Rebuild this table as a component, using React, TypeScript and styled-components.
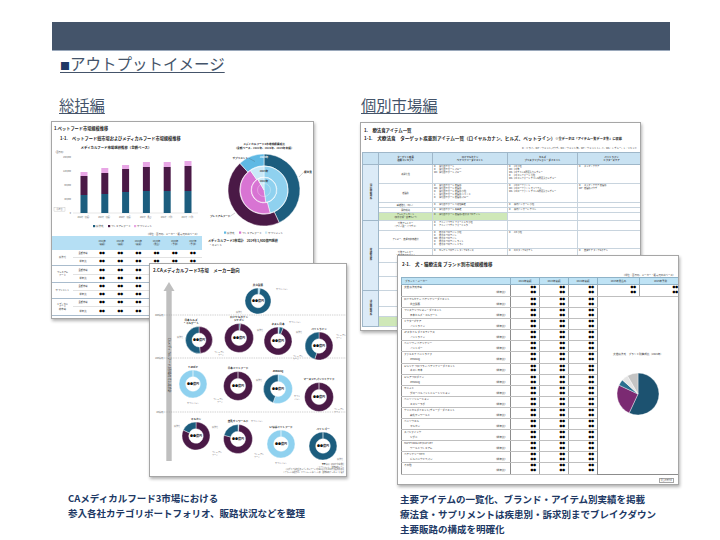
import styled, { createGlobalStyle } from "styled-components";

const GlobalStyle = createGlobalStyle`
  html,
  body {
    margin: 0;
    padding: 0;
    background: #fff;
  }
  body {
    font-family: "Noto Sans CJK JP", "Noto Sans", sans-serif;
  }
`;

const C = {
  teal: "#1c5d7e",
  purple: "#4a1946",
  pink: "#e8a6e5",
  magenta: "#d874d3",
  sky: "#5fb9e4",
  lightSky: "#8fd1ef",
  pale: "#c9e9f8",
  arrow: "#bfbfbf",
};

// ---- geometry helpers for the little charts ----

function polar(cx: number, cy: number, r: number, deg: number) {
  const a = ((deg - 90) * Math.PI) / 180;
  return [cx + r * Math.cos(a), cy + r * Math.sin(a)];
}

function sector(cx: number, cy: number, ro: number, ri: number, a0: number, a1: number) {
  const end = a1 - a0 >= 359.9 ? a0 + 359.9 : a1;
  const large = end - a0 > 180 ? 1 : 0;
  const [x0, y0] = polar(cx, cy, ro, a0);
  const [x1, y1] = polar(cx, cy, ro, end);
  if (ri <= 0) {
    return `M${cx},${cy} L${x0},${y0} A${ro},${ro} 0 ${large} 1 ${x1},${y1} Z`;
  }
  const [x2, y2] = polar(cx, cy, ri, end);
  const [x3, y3] = polar(cx, cy, ri, a0);
  return `M${x0},${y0} A${ro},${ro} 0 ${large} 1 ${x1},${y1} L${x2},${y2} A${ri},${ri} 0 ${large} 0 ${x3},${y3} Z`;
}

type Seg = [number, number, string];

// ---- page frame ----

const Page = styled.div`
  width: 720px;
  height: 540px;
  overflow: hidden;
  box-sizing: border-box;
  padding-top: 22px;
  background: #fff;
`;

const HeaderBar = styled.div`
  margin-left: 52px;
  width: 618px;
  height: 28px;
  background: #44546a;
  border-bottom: 1px solid #9aa8bb;
`;

const PageTitle = styled.h1`
  width: fit-content;
  margin: 2px 0 0 60px;
  font-size: 15.5px;
  font-weight: 400;
  line-height: 20px;
  color: #44546a;
  text-decoration: underline;
  text-decoration-thickness: 1px;
  text-underline-offset: 2px;
`;

const Bullet = styled.span`
  color: #1f3864;
  font-size: 10px;
`;

const Columns = styled.div`
  display: flex;
  margin-top: 18px;
  padding-left: 51px;
`;

const Column = styled.div<{ $w: number }>`
  width: ${(p) => p.$w}px;
  flex-shrink: 0;
  display: flex;
  flex-direction: column;
`;

const SectionHeading = styled.h2<{ $indent: number }>`
  width: fit-content;
  margin: 0 0 7px ${(p) => p.$indent}px;
  font-size: 15.3px;
  font-weight: 400;
  line-height: 20px;
  color: #44546a;
  text-decoration: underline;
  text-decoration-thickness: 1px;
  text-underline-offset: 2px;
`;

const DocStack = styled.div<{ $h: number }>`
  position: relative;
  height: ${(p) => p.$h}px;
`;

const Caption = styled.p<{ $top: number; $indent: number }>`
  margin: ${(p) => p.$top}px 0 0;
  padding-left: ${(p) => p.$indent}px;
  font-size: 9.5px;
  font-weight: 700;
  line-height: 15px;
  color: #203864;
  white-space: nowrap;
`;

// ---- document sheets ----

const Sheet = styled.div<{ $x: number; $y: number; $w: number; $h: number }>`
  position: absolute;
  left: ${(p) => p.$x}px;
  top: ${(p) => p.$y}px;
  width: ${(p) => p.$w}px;
  height: ${(p) => p.$h}px;
  box-sizing: border-box;
  background: #fff;
  border: 1px solid #a6a6a6;
  box-shadow: 1px 2px 3px rgba(0, 0, 0, 0.3);
  overflow: hidden;
  display: flex;
  flex-direction: column;
  color: #222;
`;

const SheetTitle = styled.div<{ $top: number; $left: number; $size?: number }>`
  padding: ${(p) => p.$top}px 0 0 ${(p) => p.$left}px;
  font-size: ${(p) => p.$size ?? 4.4}px;
  font-weight: 700;
  line-height: 6px;
  white-space: nowrap;
`;

const SmallNote = styled.span`
  font-size: 3.2px;
`;

const UnitNote = styled.div<{ $top?: number }>`
  margin-top: ${(p) => p.$top ?? 0}px;
  padding-right: 3px;
  height: 4px;
  font-size: 2.4px;
  line-height: 4px;
  text-align: right;
  color: #444;
  white-space: nowrap;
`;

// ---- sheet 1: market size ----

const SplitBody = styled.div`
  display: grid;
  grid-template-columns: 150px 1fr;
  margin-top: 1px;
`;

const Pane = styled.div`
  display: flex;
  flex-direction: column;
`;

const MarketTable = styled.table`
  width: 150px;
  border-collapse: collapse;
  table-layout: fixed;
  font-size: 2.3px;
  line-height: 2.8px;
  color: #333;
`;

const MarketHead = styled.th<{ $w?: number }>`
  width: ${(p) => (p.$w ? `${p.$w}px` : "auto")};
  height: 14px;
  padding: 0;
  background: #b5dff4;
  font-weight: 400;
  text-align: center;
`;

const MarketCell = styled.td<{ $end?: boolean }>`
  height: 7.2px;
  padding: 0;
  text-align: center;
  border-bottom: 1px solid ${(p) => (p.$end ? "#a9bccd" : "#e2e2e2")};
`;

const Mark = styled.span`
  font-size: 2.8px;
  font-weight: 700;
  color: #000;
`;

const PaneLead = styled.div`
  margin: 2px 0 0 6px;
  font-size: 3.1px;
  font-weight: 700;
  line-height: 4px;
  white-space: nowrap;
`;

const PaneComment = styled.div`
  margin-left: 7px;
  font-size: 2.6px;
  line-height: 4px;
`;

const bars = [
  { year: "2022年（実績）", t: 53, p: 34, k: 30 },
  { year: "2023年（実績）", t: 52, p: 31, k: 26 },
  { year: "2024年（実績）", t: 50, p: 27, k: 23 },
  { year: "2025年（見込）", t: 49, p: 25, k: 20 },
  { year: "2026年（予測）", t: 49, p: 25, k: 20 },
  { year: "2027年（予測）", t: 49, p: 24, k: 19 },
];

const ticks: [string, number][] = [
  ["160,000", 15],
  ["120,000", 29],
  ["80,000", 43],
  ["40,000", 57],
  ["0", 71],
];

function BarChart() {
  const base = 71;
  return (
    <svg width={150} height={90} viewBox="0 0 150 90">
      <text x={64} y={6.5} fontSize={3.4} fontWeight={700} textAnchor="middle" fill="#222">
        メディカルフード市場規模推移（金額ベース）
      </text>
      <text x={2} y={11} fontSize={2.2} fill="#555">
        （百万円）
      </text>
      {ticks.map(([v, y]) => (
        <text key={v} x={19} y={y + 0.8} fontSize={2.2} textAnchor="end" fill="#555">
          {v}
        </text>
      ))}
      <rect x={2} y={65.5} width={11} height={3.6} fill="none" stroke="#a6a6a6" strokeWidth={0.3} />
      <text x={7.5} y={68.2} fontSize={1.8} textAnchor="middle" fill="#777">
        （参考値）
      </text>
      <line x1={21} y1={base} x2={146} y2={base} stroke="#bfbfbf" strokeWidth={0.4} />
      {bars.map((b, i) => {
        const x = 32 + i * 20.8 - 3.5;
        return (
          <g key={b.year}>
            <rect x={x} y={b.k} width={7} height={b.p - b.k} fill={C.pink} />
            <rect x={x} y={b.p} width={7} height={b.t - b.p} fill={C.purple} />
            <rect x={x} y={b.t} width={7} height={base - b.t} fill={C.teal} />
            <text x={x + 3.5} y={75.5} fontSize={1.8} textAnchor="middle" fill="#555">
              {b.year}
            </text>
          </g>
        );
      })}
      <rect x={41} y={83} width={2.2} height={2.2} fill={C.teal} />
      <text x={44} y={85.1} fontSize={2.5} fill="#444">
        療法食
      </text>
      <rect x={56} y={83} width={2.2} height={2.2} fill={C.purple} />
      <text x={59} y={85.1} fontSize={2.5} fill="#444">
        プレミアムフード
      </text>
      <rect x={82} y={83} width={2.2} height={2.2} fill={C.pink} />
      <text x={85} y={85.1} fontSize={2.5} fill="#444">
        サプリメント
      </text>
    </svg>
  );
}

const rings: { ro: number; ri: number; segs: Seg[] }[] = [
  { ro: 36, ri: 24.2, segs: [[0, 155, C.teal], [155, 318, C.purple], [318, 360, C.sky]] },
  { ro: 23.8, ri: 12.9, segs: [[0, 165, C.lightSky], [165, 325, C.magenta], [325, 360, C.pale]] },
  { ro: 12.5, ri: 0, segs: [[0, 172, C.lightSky], [172, 330, C.magenta], [330, 360, C.pale]] },
];

function ShareDonut() {
  const cx = 62;
  const cy = 48;
  return (
    <svg width={111} height={95} viewBox="0 0 111 95">
      <text x={cx} y={3.4} fontSize={2.7} fontWeight={700} textAnchor="middle" fill="#222">
        メディカルフード3市場規模構成比
      </text>
      <text x={cx} y={7.2} fontSize={2.7} fontWeight={700} textAnchor="middle" fill="#222">
        （金額ベース、2022年、2023年、2024年実績）
      </text>
      {rings.map((ring, ri) =>
        ring.segs.map(([a0, a1, col], si) => (
          <path
            key={`${ri}-${si}`}
            d={sector(cx, cy, ring.ro, ring.ri, a0, a1)}
            fill={col}
            stroke="#fff"
            strokeWidth={0.5}
          />
        ))
      )}
      <circle cx={cx} cy={cy} r={6.5} fill="none" stroke="#fff" strokeWidth={0.3} />
      <text x={cx} y={15.5} fontSize={2.5} fontWeight={700} textAnchor="middle" fill="#fff">
        2024年
      </text>
      <text x={cx} y={30} fontSize={2.5} fontWeight={700} textAnchor="middle" fill="#222">
        2023年
      </text>
      <text x={cx} y={40} fontSize={2.5} fontWeight={700} textAnchor="middle" fill="#222">
        2022年
      </text>
      <text x={46} y={16.6} fontSize={2.6} fontWeight={700} textAnchor="end" fill="#222">
        サプリメント
      </text>
      <line x1={46.5} y1={16} x2={53} y2={19.5} stroke="#444" strokeWidth={0.25} />
      <text x={102} y={30.8} fontSize={2.6} fontWeight={700} fill="#222">
        療法食
      </text>
      <line x1={97} y1={35} x2={101.5} y2={30.3} stroke="#444" strokeWidth={0.25} />
      <text x={8} y={74.8} fontSize={2.6} fontWeight={700} fill="#222">
        プレミアムフード
      </text>
      <line x1={28.5} y1={74} x2={33} y2={71} stroke="#444" strokeWidth={0.25} />
      <rect x={22} y={89.5} width={2.2} height={2.2} fill={C.sky} />
      <text x={25} y={91.6} fontSize={2.5} fill="#444">
        療法食
      </text>
      <rect x={37} y={89.5} width={2.2} height={2.2} fill={C.magenta} />
      <text x={40} y={91.6} fontSize={2.5} fill="#444">
        プレミアムフード
      </text>
      <rect x={63} y={89.5} width={2.2} height={2.2} fill={C.pale} />
      <text x={66} y={91.6} fontSize={2.5} fill="#444">
        サプリメント
      </text>
    </svg>
  );
}

const years: [string, string][] = [
  ["2022年", "（実績）"],
  ["2023年", "（実績）"],
  ["2024年", "（実績）"],
  ["2025年", "（見込）"],
  ["2026年", "（予測）"],
  ["2027年", "（予測）"],
];

const marketGroups: string[][] = [["療法食"], ["プレミアム", "フード"], ["サプリメント"], ["メディカル", "フード", "総市場"]];

function MarketSheet() {
  return (
    <Sheet $x={0} $y={0} $w={263} $h={198}>
      <SheetTitle $top={3} $left={2} $size={4.2}>
        1.ペットフード市場規模推移
      </SheetTitle>
      <SheetTitle $top={4} $left={8} $size={4.2}>
        1-1.　ペットフード総市場およびメディカルフード市場規模推移
      </SheetTitle>
      <SplitBody>
        <Pane>
          <BarChart />
          <UnitNote>（単位：百万円、メーカー・販売元出荷ベース）</UnitNote>
          <MarketTable>
            <thead>
              <tr>
                <MarketHead $w={21} />
                <MarketHead $w={20} />
                {years.map(([y, k]) => (
                  <MarketHead key={y}>
                    {y}
                    <br />
                    {k}
                  </MarketHead>
                ))}
              </tr>
            </thead>
            <tbody>
              {marketGroups.map((g) =>
                ["金額市場", "前年比"].map((sub, si) => (
                  <tr key={g.join() + sub}>
                    {si === 0 && (
                      <MarketCell rowSpan={2} $end>
                        {g.map((l) => (
                          <div key={l}>{l}</div>
                        ))}
                      </MarketCell>
                    )}
                    <MarketCell $end={si === 1}>{sub}</MarketCell>
                    {years.map(([y]) => (
                      <MarketCell key={y} $end={si === 1}>
                        <Mark>●●</Mark>
                      </MarketCell>
                    ))}
                  </tr>
                ))
              )}
            </tbody>
          </MarketTable>
        </Pane>
        <Pane>
          <ShareDonut />
          <PaneLead>メディカルフード3市場計　2024年1,600億円規模</PaneLead>
          <PaneComment>・コメント</PaneComment>
        </Pane>
      </SplitBody>
    </Sheet>
  );
}

// ---- sheet 2: maker positioning ----

type Tag = { t: string[]; x: number; y: number; a?: "start" | "middle" | "end" };
type Maker = { name: string[]; nx?: number; cx: number; cy: number; r: number; segs: Seg[]; tags: Tag[] };

const PF = ["プレミアム", "フード"];

const makers: Maker[] = [
  {
    name: ["共立製薬"], cx: 108, cy: 37, r: 13,
    segs: [[0, 10, C.lightSky], [10, 360, C.teal]],
    tags: [{ t: ["サプリメント"], x: 126, y: 26 }, { t: ["療法食"], x: 92, y: 49, a: "end" }],
  },
  {
    name: ["日本ヒルズ", "・コルゲート"], nx: 41, cx: 49, cy: 76, r: 13.5,
    segs: [[0, 175, C.purple], [175, 360, C.teal]],
    tags: [{ t: ["療法食"], x: 33, y: 74, a: "end" }],
  },
  {
    name: ["ロイヤルカナン", "ジャポン"], cx: 89, cy: 74, r: 14.5,
    segs: [[0, 6, C.teal], [6, 360, C.purple]],
    tags: [{ t: ["療法食"], x: 107, y: 67 }, { t: PF, x: 74, y: 89, a: "end" }],
  },
  {
    name: ["ネスレ日本"], cx: 128, cy: 77, r: 14,
    segs: [[0, 6, C.lightSky], [6, 22, C.teal], [22, 360, C.purple]],
    tags: [{ t: ["サプリメント"], x: 139, y: 59 }, { t: PF, x: 143, y: 93 }],
  },
  {
    name: ["ペットライン"], cx: 169, cy: 82, r: 14,
    segs: [[0, 198, C.purple], [198, 360, C.teal]],
    tags: [{ t: ["療法食"], x: 152, y: 69, a: "end" }, { t: PF, x: 186, y: 72 }],
  },
  {
    name: ["Y and P"], cx: 43, cy: 120, r: 14,
    segs: [[0, 360, C.lightSky]],
    tags: [{ t: ["サプリメント"], x: 43, y: 140, a: "middle" }],
  },
  {
    name: ["日本ペットフード"], cx: 88, cy: 122, r: 14.5,
    segs: [[0, 360, C.purple]],
    tags: [{ t: PF, x: 73, y: 136, a: "end" }],
  },
  {
    name: ["ZENOAQ"], cx: 128, cy: 125, r: 14.5,
    segs: [[0, 200, C.lightSky], [200, 360, C.teal]],
    tags: [{ t: ["療法食"], x: 112, y: 117, a: "end" }, { t: ["サプリ", "メント"], x: 144, y: 133 }],
  },
  {
    name: ["マースジャパンリミテッド"], cx: 169, cy: 133, r: 14.5,
    segs: [[0, 360, C.purple]],
    tags: [{ t: PF, x: 184, y: 146 }],
  },
  {
    name: ["マルカン"], cx: 46, cy: 172, r: 14,
    segs: [[0, 295, C.purple], [295, 360, C.teal]],
    tags: [{ t: ["療法食"], x: 30, y: 163, a: "end" }, { t: PF, x: 62, y: 189 }],
  },
  {
    name: ["森乳サンワールド"], cx: 88, cy: 175, r: 14.5,
    segs: [[0, 4, C.lightSky], [4, 285, C.purple], [285, 360, C.teal]],
    tags: [{ t: ["療法食"], x: 68, y: 164, a: "end" }, { t: ["サプリメント"], x: 101, y: 158 }, { t: PF, x: 104, y: 191 }],
  },
  {
    name: ["いなばペットフード"], cx: 131, cy: 180, r: 14,
    segs: [[0, 360, C.lightSky]],
    tags: [{ t: ["サプリメント"], x: 131, y: 200, a: "middle" }],
  },
  {
    name: ["ペットゴー"], cx: 173, cy: 182, r: 14,
    segs: [[0, 360, C.teal]],
    tags: [{ t: ["療法食"], x: 187, y: 196 }],
  },
];

function MakerDonut({ m }: { m: Maker }) {
  const ri = m.r * 0.52;
  return (
    <g>
      {m.segs.map(([a0, a1, col], i) => (
        <path key={i} d={sector(m.cx, m.cy, m.r, ri, a0, a1)} fill={col} stroke="#fff" strokeWidth={0.4} />
      ))}
      <text x={m.cx} y={m.cy + 1.1} fontSize={3} fontWeight={700} textAnchor="middle" fill="#111">
        ●●億円
      </text>
      {m.name.map((n, i) => (
        <text
          key={n}
          x={m.nx ?? m.cx}
          y={m.cy - m.r - 2.4 - (m.name.length - 1 - i) * 3.3}
          fontSize={2.6}
          fontWeight={700}
          textAnchor="middle"
          fill="#222"
        >
          {n}
        </text>
      ))}
      {m.tags.map((tag) =>
        tag.t.map((line, li) => (
          <text
            key={`${tag.x}-${line}`}
            x={tag.x}
            y={tag.y + li * 2.6}
            fontSize={2}
            textAnchor={tag.a ?? "start"}
            fill="#666"
          >
            {line}
          </text>
        ))
      )}
    </g>
  );
}

const levels: [string, number][] = [
  ["400億円", 51],
  ["100億円", 94],
  ["20億円", 148],
];

const makerNotes = [
  "・●●億円：2024年市場規模",
  "・サプリメント：動物病院ルート",
  "※円グラフは各社のメディカルフード3市場における2024年実績の構成比",
  "※ブランドは順不同。サプリメントはペット用（動物病院チャネル）を指す",
];

function MakerSheet() {
  return (
    <Sheet $x={98} $y={142} $w={198} $h={214}>
      <SheetTitle $top={3} $left={3}>
        2.CAメディカルフード3市場　メーカー動向
      </SheetTitle>
      <svg width={196} height={203} viewBox="0 9 196 203">
        <polygon points="19,18 13.5,27 24.5,27" fill={C.arrow} />
        <rect x={16.3} y={27} width={5.4} height={170} fill={C.arrow} />
        <text x={17.9} y={74} fontSize={3.1} fill="#333" transform="rotate(90 17.9 74)">
          CAメディカルフード3市場の売上高合計
        </text>
        {levels.map(([label, y]) => (
          <g key={label}>
            <line x1={14} y1={y} x2={196} y2={y} stroke="#8c8c8c" strokeWidth={0.4} strokeDasharray="1.4 0.9" />
            <text x={13.4} y={y + 0.8} fontSize={2.3} textAnchor="end" fill="#555">
              {label}
            </text>
          </g>
        ))}
        {makers.map((m) => (
          <MakerDonut key={m.name.join()} m={m} />
        ))}
        {makerNotes.map((n, i) => (
          <text key={n} x={194} y={201 + i * 2.6} fontSize={1.8} textAnchor="end" fill="#555">
            {n}
          </text>
        ))}
      </svg>
    </Sheet>
  );
}

// ---- sheet 3: item list ----

const ItemTable = styled.table`
  margin: 2px 0 0 1px;
  width: 278px;
  border-collapse: collapse;
  table-layout: fixed;
  font-size: 2.2px;
  line-height: 2.9px;
  color: #333;
`;

const ItemHead = styled.th<{ $w: number }>`
  width: ${(p) => p.$w}px;
  height: 11px;
  padding: 0;
  background: #c9e2f2;
  border: 1px solid #9fb7c9;
  font-size: 2.4px;
  font-weight: 700;
  text-align: center;
`;

const ItemRow = styled.tr<{ $h: number }>`
  height: ${(p) => p.$h}px;
`;

const ItemGroup = styled.td`
  padding: 0;
  background: #dcebf7;
  border: 1px solid #9fb7c9;
  text-align: center;
  vertical-align: middle;
`;

const VerticalLabel = styled.span`
  display: inline-block;
  writing-mode: vertical-rl;
  font-size: 2.5px;
  font-weight: 700;
  line-height: 3px;
`;

const ItemCell = styled.td<{ $green?: boolean; $center?: boolean }>`
  padding: 0.4px 1px;
  background: ${(p) => (p.$green ? "#cfe8b8" : "#fff")};
  border: 1px solid #c8d4de;
  text-align: ${(p) => (p.$center ? "center" : "left")};
  vertical-align: ${(p) => (p.$center ? "middle" : "top")};
  overflow: hidden;
`;

const CodeLine = styled.div`
  display: flex;
  white-space: nowrap;
`;

const Code = styled.span`
  width: 5px;
  flex-shrink: 0;
`;

type ItemRowData = { h: number; target: string[]; rc: string[]; hills: string[]; pl: string[]; green?: boolean };

const itemGroups: { label: string; rows: ItemRowData[] }[] = [
  {
    label: "消化器疾患系",
    rows: [
      {
        h: 19,
        target: ["高消化性"],
        rc: ["D 消化器サポート", "D 消化器サポート パピー", "WC 消化器サポート パピー"],
        hills: ["D i/d 小粒", "WC i/d 缶", "WS i/d チキン&野菜入りシチュー", "D i/d コンフォート 小粒", "WS i/d コンフォート チキン&野菜入りシチュー"],
        pl: ["D ストマックケア"],
      },
      {
        h: 19,
        target: ["低脂肪"],
        rc: ["D 消化器サポート 低脂肪", "WC 消化器サポート 低脂肪", "D 消化器サポート 低脂肪 小粒", "L 消化器サポート 低脂肪 リキッド", "D 消化器サポート 低脂肪 パピー"],
        hills: ["D i/d ローファット", "WC i/d ローファット オリジナル", "WS i/d ローファット チキン&野菜入りシチュー"],
        pl: ["D ストマックケア 低脂肪", "WP 低脂肪パウチ"],
      },
      { h: 5, target: ["繊維強化（ｶﾛﾘｰ）"], rc: ["D 消化器サポート 可溶性繊維"], hills: ["D 腸内バイオーム 小粒"], pl: [] },
      { h: 5, target: ["腸内環境"], rc: ["D 消化器サポート 高繊維"], hills: ["D 腸内バイオーム チキン"], pl: [] },
      {
        h: 6,
        green: true,
        target: ["アレルゲンカット", "（加水分解・新奇ﾀﾝﾊﾟｸ）"],
        rc: ["D 消化器サポート 低脂肪+低分子プロテイン"],
        hills: [],
        pl: [],
      },
    ],
  },
  {
    label: "皮膚疾患系",
    rows: [
      {
        h: 10,
        target: ["食物アレルギー", "（アミノ酸・ペプチド）"],
        rc: ["D アミノペプチド フォーミュラ 小粒", "D アミノペプチド フォーミュラ"],
        hills: [],
        pl: [],
      },
      {
        h: 18,
        target: ["アトピー、皮膚の健康維持"],
        rc: ["D 低分子プロテイン 小粒", "D 低分子プロテイン", "WC 低分子プロテイン", "D 低分子プロテイン ライト", "D 低分子プロテイン ドライ"],
        hills: ["D z/d 小粒"],
        pl: [],
      },
      {
        h: 14,
        target: ["食物アレルギー", "・皮膚疾患サポート", "（ｱﾚﾙｷﾞｰ）"],
        rc: ["D セレクトプロテイン ダック&ライス"],
        hills: ["D d/d ダック&ポテト"],
        pl: ["D 皮膚ケア ダック&ポテト"],
      },
      { h: 14, target: ["皮膚バリア"], rc: ["D スキンサポート"], hills: ["D ダーム ディフェンス"], pl: ["D スキンケア"] },
      { h: 14, target: ["脂漏・被毛"], rc: ["D スキンサポート パピー"], hills: ["D ダーム コンプリート"], pl: [] },
    ],
  },
  {
    label: "泌尿器疾患系",
    rows: [
      { h: 16, target: ["体重管理・肥満"], rc: ["D 満腹感サポート", "D 減量サポート"], hills: ["D r/d", "D w/d"], pl: ["D 体重管理"] },
      { h: 10, target: ["糖尿病"], rc: ["D 糖コントロール"], hills: ["D w/d 小粒"], pl: [] },
      { h: 10, green: true, target: ["ストルバイト", "尿石"], rc: ["D ユリナリーS/O"], hills: ["D c/d マルチケア"], pl: [] },
    ],
  },
];

function ItemLines({ lines }: { lines: string[] }) {
  return (
    <>
      {lines.map((l) => {
        const i = l.indexOf(" ");
        return (
          <CodeLine key={l}>
            <Code>{l.slice(0, i)}</Code>
            {l.slice(i + 1)}
          </CodeLine>
        );
      })}
    </>
  );
}

function ItemSheet() {
  return (
    <Sheet $x={0} $y={1} $w={281} $h={209}>
      <SheetTitle $top={4} $left={3}>
        1.　療法食アイテム一覧
      </SheetTitle>
      <SheetTitle $top={2} $left={3} $size={4.6}>
        1-1.　犬療法食　ターゲット疾患別アイテム一覧（ロイヤルカナン、ヒルズ、ペットライン）
        <SmallNote>※全データは「アイテム一覧データ集」に収載</SmallNote>
      </SheetTitle>
      <UnitNote $top={4}>D：ドライ、WP：ウェットパウチ、WC：ウェット缶、WT：ウェットトレイ、WS：シチュー、L：リキッド</UnitNote>
      <ItemTable>
        <thead>
          <tr>
            <ItemHead $w={15} />
            <ItemHead $w={53}>
              ターゲット疾患
              <br />
              治療コンセプト
            </ItemHead>
            <ItemHead $w={74}>
              ロイヤルカナン
              <br />
              ベテリナリーダイエット
            </ItemHead>
            <ItemHead $w={69}>
              ヒルズ
              <br />
              プリスクリプション・ダイエット
            </ItemHead>
            <ItemHead $w={67}>
              ペットライン
              <br />
              ドクターズケア
            </ItemHead>
          </tr>
        </thead>
        <tbody>
          {itemGroups.map((g) =>
            g.rows.map((r, ri) => (
              <ItemRow key={g.label + ri} $h={r.h}>
                {ri === 0 && (
                  <ItemGroup rowSpan={g.rows.length}>
                    <VerticalLabel>{g.label}</VerticalLabel>
                  </ItemGroup>
                )}
                <ItemCell $center $green={r.green}>
                  {r.target.map((t) => (
                    <div key={t}>{t}</div>
                  ))}
                </ItemCell>
                <ItemCell $green={r.green}>
                  <ItemLines lines={r.rc} />
                </ItemCell>
                <ItemCell>
                  <ItemLines lines={r.hills} />
                </ItemCell>
                <ItemCell>
                  <ItemLines lines={r.pl} />
                </ItemCell>
              </ItemRow>
            ))
          )}
        </tbody>
      </ItemTable>
    </Sheet>
  );
}

// ---- sheet 4: brand market size ----

const BrandTable = styled.table`
  margin-left: 3px;
  width: 271px;
  border-collapse: collapse;
  table-layout: fixed;
  font-size: 2.5px;
  line-height: 5px;
  color: #333;
  border: 1px solid #8c8c8c;
`;

const BrandHead = styled.th<{ $w: number; $left?: boolean }>`
  width: ${(p) => p.$w}px;
  height: 6px;
  padding: 0 0 0 ${(p) => (p.$left ? 3 : 0)}px;
  background: #bfe3f5;
  border: 1px solid #8fb3c8;
  font-size: 2.5px;
  font-weight: 400;
  line-height: 5px;
  text-align: ${(p) => (p.$left ? "left" : "center")};
  white-space: nowrap;
`;

const BrandRow = styled.tr<{ $h: number }>`
  height: ${(p) => p.$h}px;
`;

const BrandCell = styled.td`
  padding: 0;
  border-bottom: 1px solid #bfbfbf;
  border-right: 1px solid #8c8c8c;
  vertical-align: top;
`;

const BrandLine = styled.div`
  padding-left: 2px;
  height: 4.9px;
  line-height: 4.9px;
  white-space: nowrap;
`;

const MakerLine = styled.div`
  display: flex;
  justify-content: space-between;
  padding: 0 3px 0 8px;
  height: 4.9px;
  line-height: 4.9px;
  white-space: nowrap;
`;

const ValueCell = styled.td`
  padding: 0 3px 0 0;
  border-bottom: 1px solid #bfbfbf;
  border-right: 1px solid #a6a6a6;
  text-align: right;
  vertical-align: top;
  line-height: 4.9px;
`;

const PieCell = styled.td`
  padding: 0;
  border: 1px solid #8c8c8c;
  vertical-align: top;
`;

const SourceTag = styled.div`
  align-self: flex-end;
  margin: 3px 4px 0 0;
  padding: 0 1px;
  border: 1px solid #a6a6a6;
  font-size: 1.9px;
  line-height: 3px;
  color: #555;
`;

const brands: [string, string][] = [
  ["ロイヤルカナン ベテリナリーダイエット", "共立製薬"],
  ["プリスクリプション・ダイエット", "日本ヒルズ・コルゲート"],
  ["ドクターズケア", "ペットライン"],
  ["JPスタイル ダイエティクス", "ペットライン"],
  ["ベッツワン ベテリナリー", "ペットゴー"],
  ["ファルミナ ベットライフ", "ZENOAQ"],
  ["ピュリナ プロプラン ベテリナリーダイエット", "ネスレ日本"],
  ["ピュアプロダイン", "ZENOAQ"],
  ["サニメド", "グローバルペットニュートリション"],
  ["ベッツソリューション", "エスシーラボ"],
  ["クリニカルダイエット/チェーブ・ダイエット", "森乳サンワールド"],
  ["ベッツウエル", "マルカン"],
  ["スペシフィック", "シグニ"],
  ["HAPPY DOG VET/CAT VET", "ワールドプレミアム"],
  ["ベテリナリーHPM", "ビルバックジャパン"],
  ["その他", ""],
];

const brandYears = ["2022年実績", "2023年実績", "2024年実績", "2025年見込み", "2026年予測"];

const pieSegs: Seg[] = [
  [0, 205, "#1c5270"],
  [205, 295, "#7b2a72"],
  [295, 312, "#2a6f8f"],
  [312, 330, "#e4e4e4"],
  [330, 360, "#c4c4c4"],
];

function BrandPie() {
  return (
    <svg width={80} height={168} viewBox="0 0 80 168">
      <text x={40} y={58} fontSize={2.6} textAnchor="middle" fill="#333">
        犬猫療法食　ブランド別構成比（2024年）
      </text>
      {pieSegs.map(([a0, a1, col]) => (
        <path key={a0} d={sector(40, 97, 21, 0, a0, a1)} fill={col} stroke="#fff" strokeWidth={0.4} />
      ))}
    </svg>
  );
}

function Marks({ n }: { n: number }) {
  return (
    <>
      {Array.from({ length: n }, (_, i) => (
        <div key={i}>
          <Mark>●●</Mark>
        </div>
      ))}
    </>
  );
}

function BrandSheet() {
  return (
    <Sheet $x={37} $y={134} $w={282} $h={230}>
      <SheetTitle $top={5} $left={4} $size={4.5}>
        2-1.　犬・猫療法食 ブランド別市場規模推移
      </SheetTitle>
      <UnitNote $top={6}>（単位：百万円、メーカー・販売元出荷ベース）</UnitNote>
      <BrandTable>
        <thead>
          <tr>
            <BrandHead $w={105} $left>
              ブランド・メーカー
            </BrandHead>
            <BrandHead $w={28}>{brandYears[0]}</BrandHead>
            <BrandHead $w={28}>{brandYears[1]}</BrandHead>
            <BrandHead $w={28}>{brandYears[2]}</BrandHead>
            <BrandHead $w={41}>{brandYears[3]}</BrandHead>
            <BrandHead $w={41}>{brandYears[4]}</BrandHead>
          </tr>
        </thead>
        <tbody>
          <BrandRow $h={12}>
            <BrandCell>
              <BrandLine>犬猫 療法食市場</BrandLine>
              <MakerLine>
                <span />
                <span>（前年比）</span>
              </MakerLine>
            </BrandCell>
            {brandYears.map((y) => (
              <ValueCell key={y}>
                <Marks n={2} />
              </ValueCell>
            ))}
          </BrandRow>
          {brands.map(([brand, maker], i) => (
            <BrandRow key={brand} $h={11.1}>
              <BrandCell>
                <BrandLine>{brand}</BrandLine>
                <MakerLine>
                  <span>{maker}</span>
                  <span>（前年比）</span>
                </MakerLine>
              </BrandCell>
              {brandYears.slice(0, 3).map((y) => (
                <ValueCell key={y}>
                  <Marks n={2} />
                </ValueCell>
              ))}
              {i === 0 && (
                <PieCell rowSpan={brands.length} colSpan={2}>
                  <BrandPie />
                </PieCell>
              )}
            </BrandRow>
          ))}
        </tbody>
      </BrandTable>
      <SourceTag>富士経済作成</SourceTag>
    </Sheet>
  );
}

export default function App() {
  return (
    <>
      <GlobalStyle />
      <Page>
        <HeaderBar />
        <PageTitle>
          <Bullet>■</Bullet>アウトプットイメージ
        </PageTitle>
        <Columns>
          <Column $w={309}>
            <SectionHeading $indent={8}>総括編</SectionHeading>
            <DocStack $h={360}>
              <MarketSheet />
              <MakerSheet />
            </DocStack>
            <Caption $top={10} $indent={17}>
              CAメディカルフード3市場における
              <br />
              参入各社カテゴリポートフォリオ、販路状況などを整理
            </Caption>
          </Column>
          <Column $w={330}>
            <SectionHeading $indent={1}>個別市場編</SectionHeading>
            <DocStack $h={364}>
              <ItemSheet />
              <BrandSheet />
            </DocStack>
            <Caption $top={7} $indent={40}>
              主要アイテムの一覧化、ブランド・アイテム別実績を掲載
              <br />
              療法食・サプリメントは疾患別・訴求別までブレイクダウン
              <br />
              主要販路の構成を明確化
            </Caption>
          </Column>
        </Columns>
      </Page>
    </>
  );
}
